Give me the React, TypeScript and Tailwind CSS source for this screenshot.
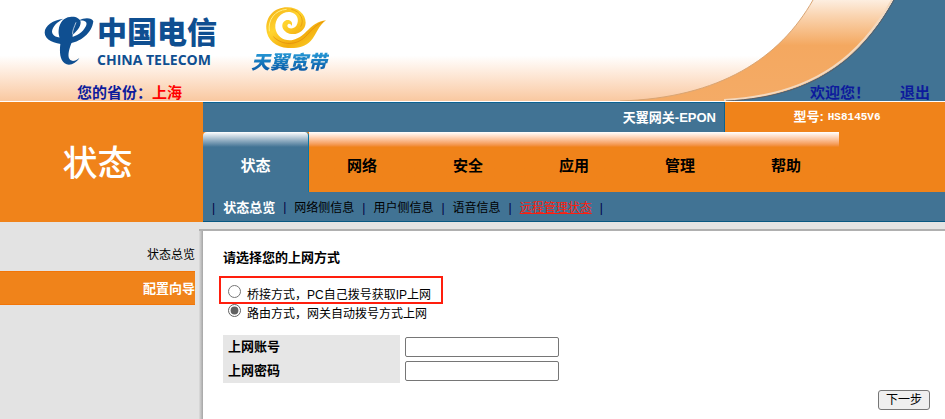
import { useState } from 'react';
import clsx from 'clsx';

const tabs = ['状态', '网络', '安全', '应用', '管理', '帮助'];
const subItems = ['状态总览', '网络侧信息', '用户侧信息', '语音信息', '远程管理状态'];

const HeaderArt = () => (
  <svg
    className="absolute inset-y-0 right-0 h-full w-[325px]"
    viewBox="620 0 325 101"
    preserveAspectRatio="none"
    aria-hidden="true"
  >
    <defs>
      <linearGradient id="swoosh" x1="0" y1="0" x2="0" y2="1">
        <stop offset="0" stopColor="#fdeee0" />
        <stop offset="0.15" stopColor="#fad5b2" />
        <stop offset="0.45" stopColor="#f4a860" />
        <stop offset="1" stopColor="#f4ab66" />
      </linearGradient>
    </defs>
    <path d="M893 0 C864 52 820 96 725 101 L945 101 L945 0 Z" fill="#417394" />
    <path d="M813 0 C780 58 720 98 620 101 L725 101 C820 96 864 52 893 0 Z" fill="url(#swoosh)" />
    <path d="M813 0 C780 58 720 98 620 101" fill="none" stroke="#d9a574" strokeWidth="1" />
    <path d="M892 0 C863 51 819 95 724 100" fill="none" stroke="#f3d9c0" strokeWidth="2" />
    <path d="M894 0 C865 52 821 97 726 101" fill="none" stroke="#5b6068" strokeWidth="1" />
  </svg>
);

const TelecomLogo = () => (
  <div className="flex items-start text-[#0f4f91]">
    <svg className="mt-3 h-14 w-[54px]" viewBox="0 0 162 168" fill="currentColor" aria-hidden="true">
      <path d="M64 20 C34 24 8 40 8 62 C9 84 38 97 72 96 C118 92 150 62 154 28 C150 18 130 14 110 26 C126 24 138 28 132 42 C122 62 104 72 84 77 C56 81 30 76 30 58 C32 42 46 30 64 20 Z" />
      <path d="M50 54 C52 32 66 16 84 15 C98 12 114 18 116 30 C116 46 104 58 92 68 L92 84 C84 104 78 120 80 136 C84 150 98 150 112 138 C102 154 82 164 68 154 C54 144 52 120 55 96 C56 80 48 70 50 54 Z" />
      <path d="M92 67 C90 57 98 43 102 31" fill="none" stroke="#fff" strokeWidth="2" />
    </svg>
    <div className="flex flex-col pt-3 pl-px">
      <span className="text-[30px] leading-[42px] font-black">中国电信</span>
      <span className="font-[Open_Sans,sans-serif] text-sm leading-3 font-bold">CHINA TELECOM</span>
    </div>
  </div>
);

const BroadbandLogo = () => (
  <div className="flex flex-col items-center">
    <svg className="mt-1 ml-3 h-12 w-[66px]" viewBox="0 0 198 144" aria-hidden="true">
      <defs>
        <linearGradient id="gold" x1="0" y1="0" x2="1" y2="1">
          <stop offset="0" stopColor="#f3ad16" />
          <stop offset="0.35" stopColor="#ffd42e" />
          <stop offset="0.65" stopColor="#f3ae0e" />
          <stop offset="1" stopColor="#ffdf38" />
        </linearGradient>
      </defs>
      <path
        d="M76 10 C108 10 131 30 131 56 C130 80 106 95 82 89 C58 82 54 56 72 49 C84 46 94 54 89 66 C86 58 78 57 76 65 C77 75 94 77 103 65 C114 48 105 27 84 24 C58 22 38 44 40 72 C44 98 66 112 92 108 C134 100 142 54 192 49 C168 66 164 92 146 111 C130 128 104 134 78 132 C42 130 14 106 13 74 C12 38 36 10 76 10 Z"
        fill="url(#gold)"
      />
      <path d="M34 98 C62 126 104 124 130 98 C148 80 160 62 184 53" fill="none" stroke="#df860c" strokeWidth="2" />
      <path d="M22 82 C17 46 40 18 74 16" fill="none" stroke="#fff083" strokeWidth="3" />
      <path d="M88 16 C116 22 128 48 116 68" fill="none" stroke="#df900c" strokeWidth="2" />
    </svg>
    <span className="bg-linear-to-b from-[#289bd8] to-[#084f9d] bg-clip-text px-0.5 text-[19px] leading-[22px] font-black text-transparent italic">
      天翼宽带
    </span>
  </div>
);

const App = () => {
  const [mode, setMode] = useState('route');

  return (
    <div className="flex min-h-screen flex-col bg-[#e3e3e3] font-[Liberation_Sans,Noto_Sans_CJK_SC,sans-serif] text-xs text-black">
      <header className="relative h-[102px] border-b border-white bg-linear-to-b from-white from-55% to-[#f9c8a0]">
        <HeaderArt />
        <div className="relative flex h-full flex-col justify-between">
          <div className="flex h-20 items-start gap-8 pl-[42px]">
            <TelecomLogo />
            <BroadbandLogo />
          </div>
          <div className="flex justify-between pr-[15px] pl-[77px] text-[15px] leading-4 font-bold text-[#0d1b9c]">
            <p>
              您的省份：<span className="text-[#ff0000]">上海</span>
            </p>
            <div className="flex gap-[30px]">
              <span>欢迎您！</span>
              <a href="#logout">退出</a>
            </div>
          </div>
        </div>
      </header>

      <div className="flex h-[120px] bg-[#f0831a]">
        <h1 className="flex w-[203px] items-center justify-center pt-1 pr-2 text-[35px] font-medium text-white">状态</h1>
        <div className="flex flex-1 flex-col">
          <div className="flex h-[30px] text-[13px] font-bold text-white">
            <div className="flex flex-1 items-center justify-end border-t border-r border-[#0c6291] bg-[#417394] pr-2">
              天翼网关-EPON
            </div>
            <div className="flex w-[220px] items-center justify-center gap-1 pl-1">
              型号:
              <span className="font-[Liberation_Mono,monospace] text-[11px]">HS8145V6</span>
            </div>
          </div>
          <nav className="flex h-[60px]">
            {tabs.map((tab, index) => (
              <a
                key={tab}
                href={`#tab-${index}`}
                className={clsx(
                  'flex w-[106px] items-center justify-center bg-linear-to-b from-white pt-2 text-[15px] font-bold',
                  index === 0
                    ? 'rounded-t-sm border-r border-[#0878a8] via-[#417394] via-25% to-[#417394] text-white'
                    : 'via-[#f0831a] via-25% to-[#f0831a]'
                )}
              >
                {tab}
              </a>
            ))}
          </nav>
          <nav className="flex flex-1 items-center gap-2 border-b border-[#075781] bg-[#417394] pt-0.5 pl-[9px]">
            <span className="text-[#000044]">|</span>
            {subItems.map((item, index) => (
              <div key={item} className="flex items-center gap-2">
                <a
                  href={`#sub-${index}`}
                  className={clsx(
                    index === 0 && 'text-[13px] font-bold text-white',
                    index === 4 && 'text-[#ff1e0d] underline decoration-1 underline-offset-1'
                  )}
                >
                  {item}
                </a>
                <span className="text-[#000044]">|</span>
              </div>
            ))}
          </nav>
        </div>
      </div>

      <div className="flex flex-1">
        <aside className="w-[195px] pt-[15px] text-right">
          <a href="#overview" className="block h-[34px] leading-9">
            状态总览
          </a>
          <a
            href="#wizard"
            className="block h-[34px] border-y border-[#f27508] bg-[#f0831a] text-[13px] leading-[34px] font-bold text-white"
          >
            配置向导
          </a>
        </aside>
        <div className="mt-[7px] ml-1 flex flex-1 border-t-2 border-[#b0b0b0]">
          <div className="w-1 bg-linear-to-r from-[#dddddd] to-[#a5a5a5]" />
          <main className="flex-1 bg-white pt-4 pr-[15px] pb-2 pl-4">
            <h2 className="pl-1 text-[13px] leading-[22px] font-bold">请选择您的上网方式</h2>
            <form onSubmit={(e) => e.preventDefault()}>
              <div className="mt-[7px] h-7 w-56 border-2 border-[#ff1e0d] pt-[7px] pl-[7px]">
                <label className="flex items-start gap-1.5 leading-5">
                  <input
                    type="radio"
                    name="mode"
                    checked={mode === 'bridge'}
                    onChange={() => setMode('bridge')}
                    className="size-[13px]"
                  />
                  桥接方式，PC自己拨号获取IP上网
                </label>
              </div>
              <label className="flex h-5 items-start gap-1.5 pl-[9px] leading-5">
                <input
                  type="radio"
                  name="mode"
                  checked={mode === 'route'}
                  onChange={() => setMode('route')}
                  className="size-[13px] accent-[#606060]"
                />
                路由方式，网关自动拨号方式上网
              </label>

              <div className="mt-[11px] ml-1 text-[13px] font-bold">
                <div className="flex h-6 items-center gap-[5px]">
                  <label htmlFor="account" className="h-6 w-[177px] bg-[#e6e6e6] pl-[5px] leading-6">
                    上网账号
                  </label>
                  <input id="account" type="text" className="h-5 w-[154px] rounded-[2px] border border-[#767676] px-1" />
                </div>
                <div className="flex h-6 items-center gap-[5px]">
                  <label htmlFor="password" className="h-6 w-[177px] bg-[#e6e6e6] pl-[5px] leading-6">
                    上网密码
                  </label>
                  <input id="password" type="password" className="h-5 w-[154px] rounded-[2px] border border-[#767676] px-1" />
                </div>
              </div>

              <div className="mt-[7px] flex justify-end">
                <button
                  type="submit"
                  className="h-5 w-[52px] rounded-[3px] border border-[#767676] bg-[#efefef] leading-[18px]"
                >
                  下一步
                </button>
              </div>
            </form>
          </main>
        </div>
      </div>
    </div>
  );
};

export default App;
